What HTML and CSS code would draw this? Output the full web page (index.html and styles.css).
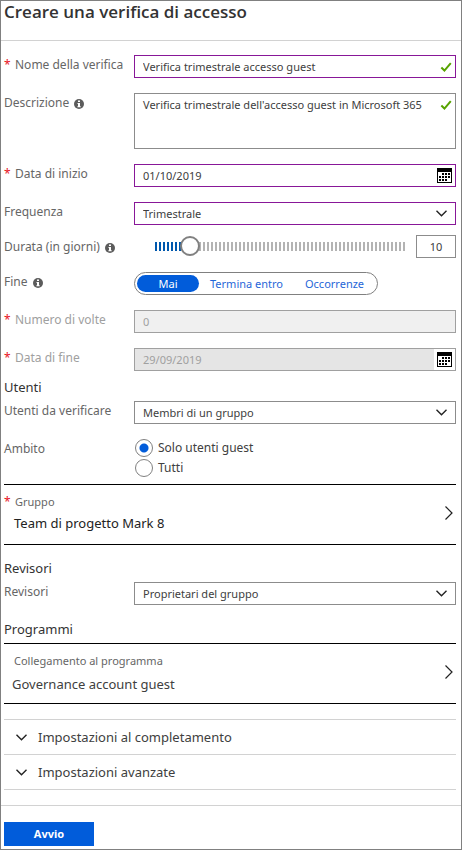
FILE: index.html
```html
<!DOCTYPE html>
<html lang="it">
<head>
<meta charset="utf-8">
<meta name="viewport" content="width=device-width, initial-scale=1">
<title>Creare una verifica di accesso</title>
<link rel="stylesheet" href="styles.css">
</head>
<body>
<svg class="sprite" width="0" height="0" aria-hidden="true">
  <symbol id="check" viewBox="0 0 10 9"><path d="M.8 5 3.6 7.7 9.3 1" fill="none" stroke="#57a300" stroke-width="1.8"/></symbol>
  <symbol id="down" viewBox="0 0 11 7"><path d="M.5 .8 5.5 5.8 10.5 .8" fill="none" stroke="#222" stroke-width="1.4"/></symbol>
  <symbol id="next" viewBox="0 0 8 14"><path d="M.5 .5 7 7 .5 13.5" fill="none" stroke="#222" stroke-width="1.2"/></symbol>
  <symbol id="info" viewBox="0 0 10 10"><circle cx="5" cy="5" r="5" fill="#5c5c5c"/><path d="M4 1.5h2v1.5H4zM3.5 4H6v3.3h.7v1H3.4v-1H4V5h-.5z" fill="#fff"/></symbol>
  <symbol id="calendar" viewBox="0 0 15 15"><path d="M0 0h15v15H0z"/><path d="M1 4h13v10H1z" fill="#fff"/><path d="M5 5h2v2H5zM8 5h2v2H8zM11 5h2v2h-2zM2 8h2v2H2zM5 8h2v2H5zM8 8h2v2H8zM11 8h2v2h-2zM2 11h2v2H2zM5 11h2v2H5zM8 11h2v2H8z"/></symbol>
</svg>
<form class="blade">
  <header class="head"><h1>Creare una verifica di accesso</h1></header>
  <main class="content">
    <div class="row">
      <label class="label required" for="name">Nome della verifica</label>
      <div class="box active"><input id="name" type="text" value="Verifica trimestrale accesso guest"><svg class="check"><use href="#check"/></svg></div>
    </div>
    <div class="row">
      <label class="label" for="desc">Descrizione <svg class="info"><use href="#info"/></svg></label>
      <div class="box tall"><textarea id="desc">Verifica trimestrale dell'accesso guest in Microsoft 365</textarea><svg class="check"><use href="#check"/></svg></div>
    </div>
    <div class="row">
      <label class="label required" for="start">Data di inizio</label>
      <div class="box active"><input id="start" type="text" value="01/10/2019"><button class="pick" type="button" aria-label="Data di inizio"><svg><use href="#calendar"/></svg></button></div>
    </div>
    <div class="row">
      <label class="label" for="freq">Frequenza</label>
      <div class="box active choice"><select id="freq"><option>Trimestrale</option></select><svg class="down"><use href="#down"/></svg></div>
    </div>
    <div class="row slim">
      <label class="label" for="days">Durata (in giorni) <svg class="info"><use href="#info"/></svg></label>
      <div class="duration"><input id="days" class="slider" type="range" min="1" max="84" value="10"><input class="days" type="text" value="10" aria-label="Durata (in giorni)"></div>
    </div>
    <fieldset class="row">
      <legend class="hidden">Fine</legend>
      <span class="label">Fine <svg class="info"><use href="#info"/></svg></span>
      <div class="segments">
        <label><input class="hidden" type="radio" name="end" checked><span>Mai</span></label>
        <label><input class="hidden" type="radio" name="end"><span>Termina entro</span></label>
        <label><input class="hidden" type="radio" name="end"><span>Occorrenze</span></label>
      </div>
    </fieldset>
    <div class="row off">
      <label class="label required" for="times">Numero di volte</label>
      <div class="box"><input id="times" type="text" value="0" disabled></div>
    </div>
    <div class="row off">
      <label class="label required" for="stop">Data di fine</label>
      <div class="box dim"><input id="stop" type="text" value="29/09/2019" disabled><button class="pick" type="button" disabled aria-label="Data di fine"><svg><use href="#calendar"/></svg></button></div>
    </div>
    <section>
      <h2 class="near">Utenti</h2>
      <div class="row">
        <label class="label" for="users">Utenti da verificare</label>
        <div class="box choice"><select id="users"><option>Membri di un gruppo</option></select><svg class="down"><use href="#down"/></svg></div>
      </div>
      <fieldset class="row scope">
        <legend class="hidden">Ambito</legend>
        <span class="label">Ambito</span>
        <div class="radios">
          <label><input type="radio" name="scope" checked>Solo utenti guest</label>
          <label><input type="radio" name="scope">Tutti</label>
        </div>
      </fieldset>
    </section>
    <a class="link" href="#gruppo">
      <span class="pair"><span class="small required">Gruppo</span><span class="value strong">Team di progetto Mark 8</span></span>
      <svg class="next"><use href="#next"/></svg>
    </a>
    <section>
      <h2>Revisori</h2>
      <div class="row last">
        <label class="label" for="reviewers">Revisori</label>
        <div class="box choice"><select id="reviewers"><option>Proprietari del gruppo</option></select><svg class="down"><use href="#down"/></svg></div>
      </div>
    </section>
    <section>
      <h2>Programmi</h2>
      <a class="link" href="#programma">
        <span class="pair loose"><span class="small indent">Collegamento al programma</span><span class="value">Governance account guest</span></span>
        <svg class="next"><use href="#next"/></svg>
      </a>
    </section>
    <div class="accordion">
      <button type="button"><svg class="down"><use href="#down"/></svg>Impostazioni al completamento</button>
      <button type="button"><svg class="down"><use href="#down"/></svg>Impostazioni avanzate</button>
    </div>
  </main>
  <footer class="foot"><button class="start" type="submit">Avvio</button></footer>
</form>
</body>
</html>
```
FILE: styles.css
```css
* { box-sizing: border-box; }
body {
  margin: 0;
  background: #fff;
  color: #404040;
  font: 12px/20px "Noto Sans", "Open Sans", sans-serif;
}
input, textarea, select, button { font: inherit; color: inherit; margin: 0; padding: 0; border: 0; background: none; border-radius: 0; outline: 0; }
fieldset { margin: 0; padding: 0; border: 0; min-width: 0; }
svg { display: block; flex: none; }
.sprite { position: absolute; }
.hidden { position: absolute; width: 1px; height: 1px; overflow: hidden; opacity: 0; }

.blade { border: 1px solid #808080; min-height: 100vh; }
.head { height: 40px; border-bottom: 1px solid #d2d2d2; padding: 0 3px; }
h1 { margin: 0; font: 600 17px/22px "Open Sans", "Noto Sans", sans-serif; color: #333; }
.content { padding: 14px 5px 15px 3px; }

.row { display: grid; grid-template-columns: 130px minmax(0, 1fr); align-items: start; margin-bottom: 15px; }
.row.slim { margin: -5px 0 14px; align-items: center; }
.row.last { margin-bottom: 1px; }
.label { display: flex; align-items: center; gap: 5px; color: #666; }
.required::before { content: "*"; color: #e81123; width: 11px; flex: none; font-size: 12px; }
.label.required { gap: 0; }
.off .label { color: #a0a0a0; }
.info { width: 10px; height: 10px; margin-top: 2px; }

.box { display: flex; align-items: center; height: 23px; border: 1px solid #8c8c8c; font-size: 11px; }
.box input, .box textarea, .box select { flex: 1; min-width: 0; height: 21px; padding-left: 8px; }
.active { border-color: #881798; }
.box.tall { height: 56px; align-items: flex-start; }
.box.tall textarea { height: 54px; padding-top: 1px; resize: none; overflow: hidden; }
.check { width: 12px; height: 10px; margin-right: 3px; }
.tall .check { margin-top: 6px; }
.pick { width: 21px; height: 21px; display: grid; place-items: center; background: #fff; }
.pick svg { width: 15px; height: 15px; }
.off .box { background: #f0f0f0; border-color: #a0a0a0; color: #a0a0a0; }
.off .dim { background: #e5e5e5; }
.choice { position: relative; }
.choice select { appearance: none; }
.down { width: 11px; height: 7px; }
.choice .down { position: absolute; right: 8px; pointer-events: none; }

.duration { display: flex; align-items: center; justify-content: space-between; padding-left: 21px; gap: 10px; }
.slider { appearance: none; flex: 1; min-width: 0; height: 20px; }
.slider::-webkit-slider-runnable-track {
  height: 9px;
  background: repeating-linear-gradient(to right, transparent 0 2px, #fff 2px 4px), linear-gradient(to right, #0058ad 14%, #b3b3b3 14%);
}
.slider::-webkit-slider-thumb { appearance: none; width: 20px; height: 20px; margin-top: -6px; border: 2px solid #808080; border-radius: 50%; background: #fff; }
.days { width: 40px; height: 23px; border: 1px solid #8c8c8c; text-align: center; font-size: 11px; }

.segments { display: flex; justify-self: start; height: 23px; padding: 2px; border: 1px solid #808080; border-radius: 12px; color: #1f66d8; font-size: 11px; }
.segments span { display: block; line-height: 17px; min-width: 62px; padding: 0 11px; border-radius: 9px; text-align: center; }
.segments input:checked + span { background: #015cda; color: #fff; }

h2 { margin: 0; padding-top: 13px; height: 37px; font-size: 13px; line-height: 20px; font-weight: 400; color: #333; }
h2.near { margin-top: -15px; padding-top: 6px; height: 30px; }
.scope { margin-bottom: 7px; }
.radios { display: grid; gap: 2px; }
.radios label { display: flex; align-items: center; gap: 5px; height: 18px; }
.radios input { appearance: none; width: 18px; height: 18px; border: 1px solid #808080; border-radius: 50%; margin-left: 1px; }
.radios input:checked { background: radial-gradient(circle, #015cda 0 4px, #fff 5px); }

.link { display: flex; align-items: center; justify-content: space-between; height: 61px; padding: 0 3px 4px 0; border: solid #000; border-width: 1px 0; color: inherit; text-decoration: none; }
.pair { display: grid; gap: 1px; }
.loose { gap: 3px; padding-top: 2px; }
.small { display: flex; font-size: 11px; color: #666; }
.indent { padding-left: 10px; }
.value { padding-left: 8px; font-size: 13px; }
.strong { color: #222; padding-left: 10px; }
.next { width: 8px; height: 14px; }
.accordion { margin-top: 15px; border-top: 1px solid #d2d2d2; }
.accordion button { display: flex; align-items: center; gap: 11px; width: 100%; height: 35px; padding-left: 12px; border-bottom: 1px solid #d2d2d2; font-size: 13px; }
.foot { border-top: 1px solid #d2d2d2; padding: 16px 3px 3px; }
.start { display: block; width: 90px; height: 24px; background: #015cda; color: #fff; font-size: 11px; font-weight: 700; }
```
